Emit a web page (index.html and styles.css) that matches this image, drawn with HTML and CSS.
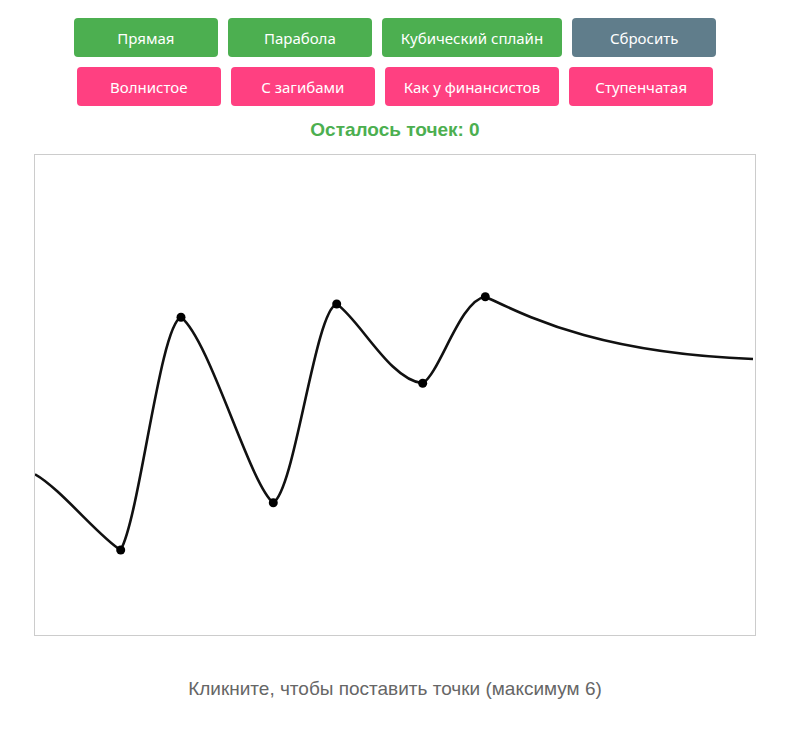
FILE: index.html
```html
<!DOCTYPE html>
<html lang="ru">
<head>
<meta charset="utf-8">
<title>Кривые</title>
<link rel="stylesheet" href="styles.css">
</head>
<body>
<div class="app">
  <div class="row">
    <button class="btn green">Прямая</button>
    <button class="btn green">Парабола</button>
    <button class="btn green">Кубический сплайн</button>
    <button class="btn grey">Сбросить</button>
  </div>
  <div class="row">
    <button class="btn pink">Волнистое</button>
    <button class="btn pink">С загибами</button>
    <button class="btn pink">Как у финансистов</button>
    <button class="btn pink">Ступенчатая</button>
  </div>
  <div class="status">Осталось точек: 0</div>
  <div class="board">
    <svg class="plot" width="720" height="480" viewBox="0 0 720 480">
      <path class="curve" d="M0,319.3 C25,333 65,383 85.7,395 C105,360 125,170 146,162.3 C175,185 215,330 238.3,347.7 C260,335 280,155 301.7,149 C325,165 355,225 387.7,228.3 C405,218 425,145 450.3,141.7 C490,160 560,198 718,204"/>
      <circle cx="85.7" cy="395" r="4.5"/>
      <circle cx="146" cy="162.3" r="4.5"/>
      <circle cx="238.3" cy="347.7" r="4.5"/>
      <circle cx="301.7" cy="149" r="4.5"/>
      <circle cx="387.7" cy="228.3" r="4.5"/>
      <circle cx="450.3" cy="141.7" r="4.5"/>
    </svg>
  </div>
  <p class="hint">Кликните, чтобы поставить точки (максимум 6)</p>
</div>
</body>
</html>
```

FILE: styles.css
```css
html, body {
  margin: 0;
  padding: 0;
  background: #fff;
}
.app {
  width: 790px;
  padding-top: 18px;
  display: flex;
  flex-direction: column;
  align-items: center;
}
.row {
  display: flex;
  justify-content: center;
  gap: 10px;
  margin-bottom: 10px;
}
.btn {
  box-sizing: border-box;
  min-width: 144px;
  height: 39px;
  padding: 0 19px;
  border: none;
  border-radius: 4px;
  color: #fff;
  font-family: "Noto Sans", sans-serif;
  font-size: 15px;
  cursor: pointer;
}
.green { background: #4caf50; }
.grey { background: #607d8b; }
.pink { background: #ff4081; }
.status {
  margin-top: 3px;
  font-family: "Liberation Sans", Arial, sans-serif;
  font-weight: bold;
  font-size: 19px;
  line-height: 22px;
  color: #4caf50;
}
.board {
  margin-top: 13px;
  width: 720px;
  height: 480px;
  border: 1px solid #ccc;
}
.plot {
  display: block;
}
.curve {
  fill: none;
  stroke: #111;
  stroke-width: 2.6;
}
.plot circle {
  fill: #000;
}
.hint {
  margin: 42px 0 0;
  font-family: "Liberation Sans", Arial, sans-serif;
  font-size: 19px;
  line-height: 22px;
  color: #666;
}
```
